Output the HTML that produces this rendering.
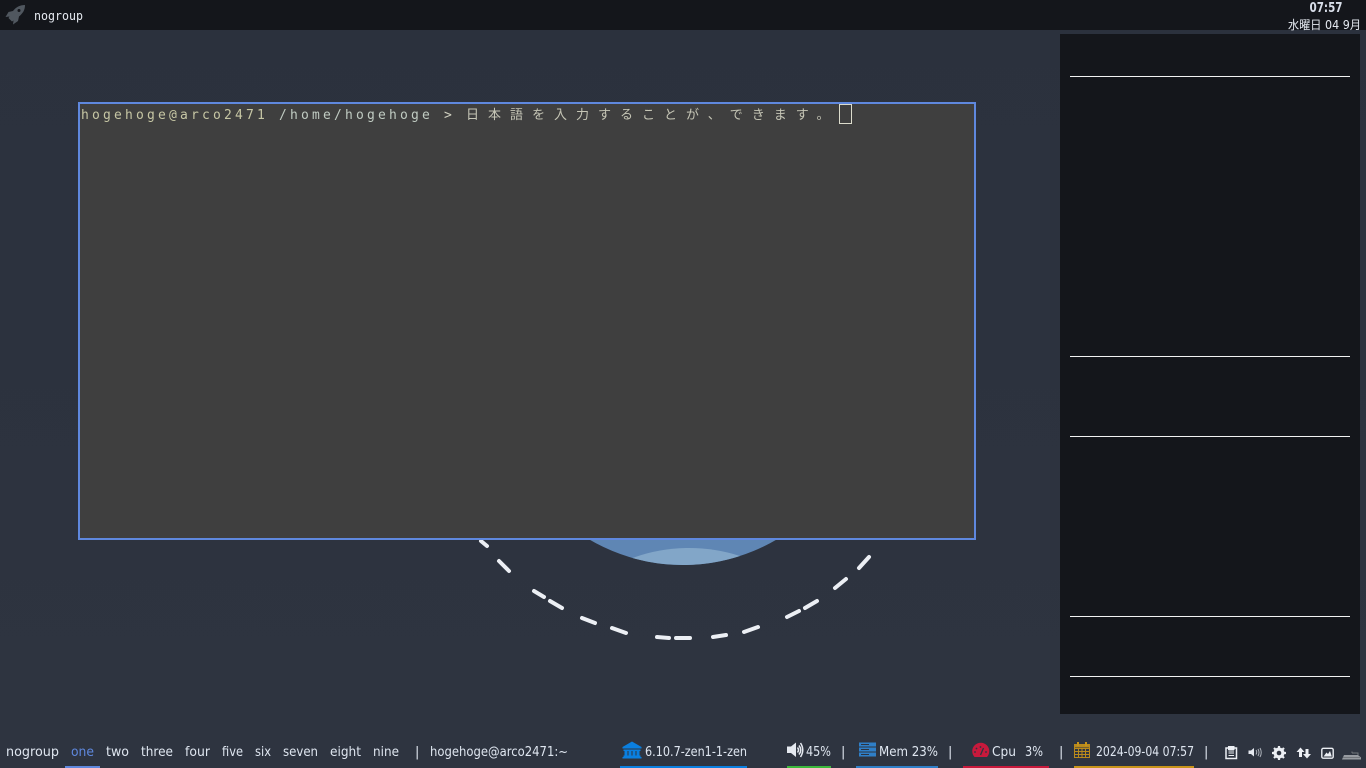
<!DOCTYPE html>
<html lang="ja">
<head>
<meta charset="utf-8">
<title>Desktop</title>
<style>
html,body{margin:0;padding:0;width:1366px;height:768px;overflow:hidden;background:#2e3440}
svg{display:block;position:absolute;left:0;top:0}
.b{font-family:"DejaVu Sans","Noto Sans CJK JP",sans-serif;font-size:13px;fill:#dfe6f0}
.t{font-family:"DejaVu Sans Mono","Noto Sans CJK JP",monospace;font-size:12px}
.m{font-family:"DejaVu Sans Mono",monospace;font-size:13px}
.j{font-family:"DejaVu Sans","Noto Sans CJK JP",sans-serif;font-size:12px}
.k{font-family:"Noto Sans CJK JP",sans-serif;font-size:13px}
</style>
</head>
<body>
<svg width="1366" height="768" viewBox="0 0 1366 768" xmlns="http://www.w3.org/2000/svg">
<defs>
<linearGradient id="bg" x1="0" y1="0" x2="0" y2="1">
<stop offset="0" stop-color="#2b313d"/><stop offset="1" stop-color="#2e3440"/>
</linearGradient>
</defs>
<rect width="1366" height="768" fill="url(#bg)"/>

<!-- wallpaper -->
<circle cx="683" cy="380" r="185" fill="#5f86b4"/>
<path d="M632.500 558A166 166 0 0 1 740 556A185 185 0 0 1 632.500 558Z" fill="#82a6c8"/>
<g stroke="#eceff4" stroke-width="4" stroke-linecap="round" fill="none">
<path d="M481 541L487 546"/><path d="M499 561L509 571"/><path d="M534 591L544 597"/><path d="M550 601L562 608"/>
<path d="M582 618L595 623"/><path d="M612 628L626 633"/><path d="M657 637L669 638"/><path d="M676 638L690 638"/>
<path d="M713 637L726 635"/><path d="M744 632L758 627"/><path d="M787 617L799 611"/><path d="M805 608L817 601"/>
<path d="M835 588L846 579"/><path d="M859 568L869 557"/>
</g>

<!-- top bar -->
<rect width="1366" height="30" fill="#14161b"/>
<path d="M25 5C20 5 16 7 13 11L8.500 12L5.500 17L9.500 16.500L8.500 18L12 21.500L13.500 20.500L13 24.500L18 21L19 16.500C23 13 25 10 25 5Z" fill="#50575f"/>
<circle cx="19" cy="10.500" r="1.500" fill="#14161b"/>
<text x="34" y="20" class="t" fill="#e5e9f0" textLength="49" lengthAdjust="spacingAndGlyphs">nogroup</text>
<text x="1309.500" y="12" font-family="'DejaVu Sans',sans-serif" font-size="13.500" font-weight="700" fill="#d8dee9" textLength="33" lengthAdjust="spacingAndGlyphs">07:57</text>
<text x="1288" y="29" class="j" fill="#e5e9f0" textLength="73" lengthAdjust="spacingAndGlyphs">水曜日 04 9月</text>

<!-- right panel -->
<rect x="1060" y="34" width="300" height="680" fill="#14161b"/>
<g fill="#f2f2f2">
<rect x="1070" y="76" width="280" height="1"/><rect x="1070" y="356" width="280" height="1"/>
<rect x="1070" y="436" width="280" height="1"/><rect x="1070" y="616" width="280" height="1"/>
<rect x="1070" y="676" width="280" height="1"/>
</g>

<!-- terminal -->
<rect x="79" y="103" width="896" height="436" fill="#3f3f3f" stroke="#5f88de" stroke-width="2"/>
<text y="119" class="m" letter-spacing="3.170" fill="#c6c6a4"><tspan x="81">hogehoge@arco2471</tspan><tspan x="279" fill="#c0cbc2">/home/hogehoge</tspan><tspan x="444" fill="#d0d0c0">&gt;</tspan></text>
<text y="119" class="k" fill="#c6c6b6" letter-spacing="9"><tspan x="466">日本語を入力することが、できます。</tspan></text>
<rect x="839.500" y="104.500" width="12" height="19" fill="none" stroke="#dcdccc" stroke-width="1"/>

<!-- bottom bar text -->
<text x="6" y="756" class="b" textLength="53" lengthAdjust="spacingAndGlyphs">nogroup</text>
<text x="71" y="756" class="b" style="fill:#5f88de" textLength="23" lengthAdjust="spacingAndGlyphs">one</text>
<rect x="65" y="766" width="35" height="2" fill="#5f88de"/>
<text x="106" y="756" class="b" textLength="23" lengthAdjust="spacingAndGlyphs">two</text>
<text x="141" y="756" class="b" textLength="32" lengthAdjust="spacingAndGlyphs">three</text>
<text x="185" y="756" class="b" textLength="25" lengthAdjust="spacingAndGlyphs">four</text>
<text x="222" y="756" class="b" textLength="21" lengthAdjust="spacingAndGlyphs">five</text>
<text x="255" y="756" class="b" textLength="16" lengthAdjust="spacingAndGlyphs">six</text>
<text x="283" y="756" class="b" textLength="35" lengthAdjust="spacingAndGlyphs">seven</text>
<text x="330" y="756" class="b" textLength="31" lengthAdjust="spacingAndGlyphs">eight</text>
<text x="373" y="756" class="b" textLength="26" lengthAdjust="spacingAndGlyphs">nine</text>
<text x="415" y="756" class="b">|</text>
<text x="430" y="756" class="b" textLength="138" lengthAdjust="spacingAndGlyphs">hogehoge@arco2471:~</text>

<!-- kernel -->
<path d="M632 741.500L641.500 747V748.500H622.500V747ZM623.500 749.500H640.500V751H623.500ZM624.500 751H627.500V755.500H624.500ZM628.500 751H631.500V755.500H628.500ZM632.500 751H635.500V755.500H632.500ZM636.500 751H639.500V755.500H636.500ZM623.500 755.500H640.500V757H623.500ZM622.500 757H641.500V758.500H622.500Z" fill="#0a7fe0"/>
<text x="645" y="756" class="b" textLength="102" lengthAdjust="spacingAndGlyphs">6.10.7-zen1-1-zen</text>
<rect x="620" y="766" width="127" height="2" fill="#0a7fe0"/>

<!-- volume -->
<path d="M787 746.500H791L796 742.500V757L791 753H787Z" fill="#e5e9f0"/>
<path d="M797.500 747.500Q799.500 750 797.500 752.500M799 745.500Q802.500 750 799 754.500M800.500 743Q805 750 800.500 757" stroke="#e5e9f0" stroke-width="1.500" fill="none"/>
<text x="806" y="756" class="b" textLength="25" lengthAdjust="spacingAndGlyphs">45%</text>
<rect x="787" y="766" width="44" height="2" fill="#3cb93c"/>
<text x="841" y="756" class="b">|</text>

<!-- memory -->
<g fill="#2f7fc8">
<path d="M859 742.500H876V746.500H859ZM859 747.500H876V751.500H859ZM859 752.500H876V756.500H859Z"/>
</g>
<path d="M861 744.500H869M861 749.500H869M861 754.500H869" stroke="#2e3440" stroke-width="1"/>
<text x="879" y="756" class="b" textLength="59" lengthAdjust="spacingAndGlyphs">Mem 23%</text>
<rect x="856" y="766" width="82" height="2" fill="#2f7fc8"/>
<text x="948" y="756" class="b">|</text>

<!-- cpu -->
<path d="M974.500 757A8.500 8.500 0 1 1 987 757Z" fill="#c8193c"/>
<path d="M980.500 755L983.500 748" stroke="#2e3440" stroke-width="1.300"/>
<g fill="#2e3440"><circle cx="975" cy="752" r=".9"/><circle cx="976.500" cy="748.500" r=".9"/><circle cx="980.500" cy="747" r=".9"/><circle cx="986" cy="752" r=".9"/></g>
<text x="992" y="756" class="b" textLength="24" lengthAdjust="spacingAndGlyphs">Cpu</text>
<text x="1025" y="756" class="b" textLength="18" lengthAdjust="spacingAndGlyphs">3%</text>
<rect x="963" y="766" width="86" height="2" fill="#c8193c"/>
<text x="1059" y="756" class="b">|</text>

<!-- calendar -->
<path d="M1074.500 744.500H1089.500V757.500H1074.500ZM1074.500 748.500H1089.500M1074.500 751.500H1089.500M1074.500 754.500H1089.500M1078.500 748.500V757.500M1082 748.500V757.500M1085.500 748.500V757.500" fill="none" stroke="#b98a1c" stroke-width="1"/>
<rect x="1074.500" y="744.500" width="15" height="3" fill="#b98a1c"/>
<rect x="1077" y="742" width="2" height="4" fill="#c8941a"/><rect x="1085" y="742" width="2" height="4" fill="#c8941a"/>
<text x="1096" y="756" class="b" textLength="98" lengthAdjust="spacingAndGlyphs">2024-09-04 07:57</text>
<rect x="1074" y="766" width="120" height="2" fill="#c8941a"/>
<text x="1204" y="756" class="b">|</text>

<!-- tray -->
<path d="M1226 748H1236.500V758.500H1226Z" fill="none" stroke="#eceff4" stroke-width="1.500"/>
<path d="M1228.500 746.500H1234V749.500H1228.500ZM1228.500 751H1234M1228.500 753H1234M1228.500 755.500H1234" stroke="#eceff4" stroke-width="1" fill="#eceff4"/>
<path d="M1248.500 750.500H1251L1254 748V756.500L1251 754H1248.500Z" fill="#e5e9f0"/>
<path d="M1256 750Q1257.500 752 1256 754.500M1258 749Q1260 752.500 1258 756M1260 748Q1262.500 752.500 1260 757" stroke="#aeb3bb" stroke-width="1" fill="none"/>
<circle cx="1279" cy="753" r="4" fill="none" stroke="#eceff4" stroke-width="3"/>
<path d="M1279 746V760M1272 753H1286M1274 748L1284 758M1284 748L1274 758" stroke="#eceff4" stroke-width="2.200"/>
<circle cx="1279" cy="753" r="2.300" fill="#2e3440"/>
<path d="M1300.500 747.500L1296.500 752H1299V757H1302V752H1304.500ZM1307 758.500L1303 754H1305.500V749H1308.500V754H1311Z" fill="#eceff4"/>
<rect x="1321.800" y="748.300" width="11.400" height="9.900" rx="1.500" fill="none" stroke="#eceff4" stroke-width="1.400"/>
<path d="M1323.500 756.500L1326.500 752.500L1328 754L1330 751L1331.800 756.500Z" fill="#eceff4"/>
<path d="M1342 759.500L1344 755H1358L1361 757.500V759.500Z" fill="#979ba1"/>
<path d="M1343 757.500H1360M1352 753H1358V755M1352 753V751.500" stroke="#73777d" stroke-width="1" fill="none"/>
</svg>
</body>
</html>
